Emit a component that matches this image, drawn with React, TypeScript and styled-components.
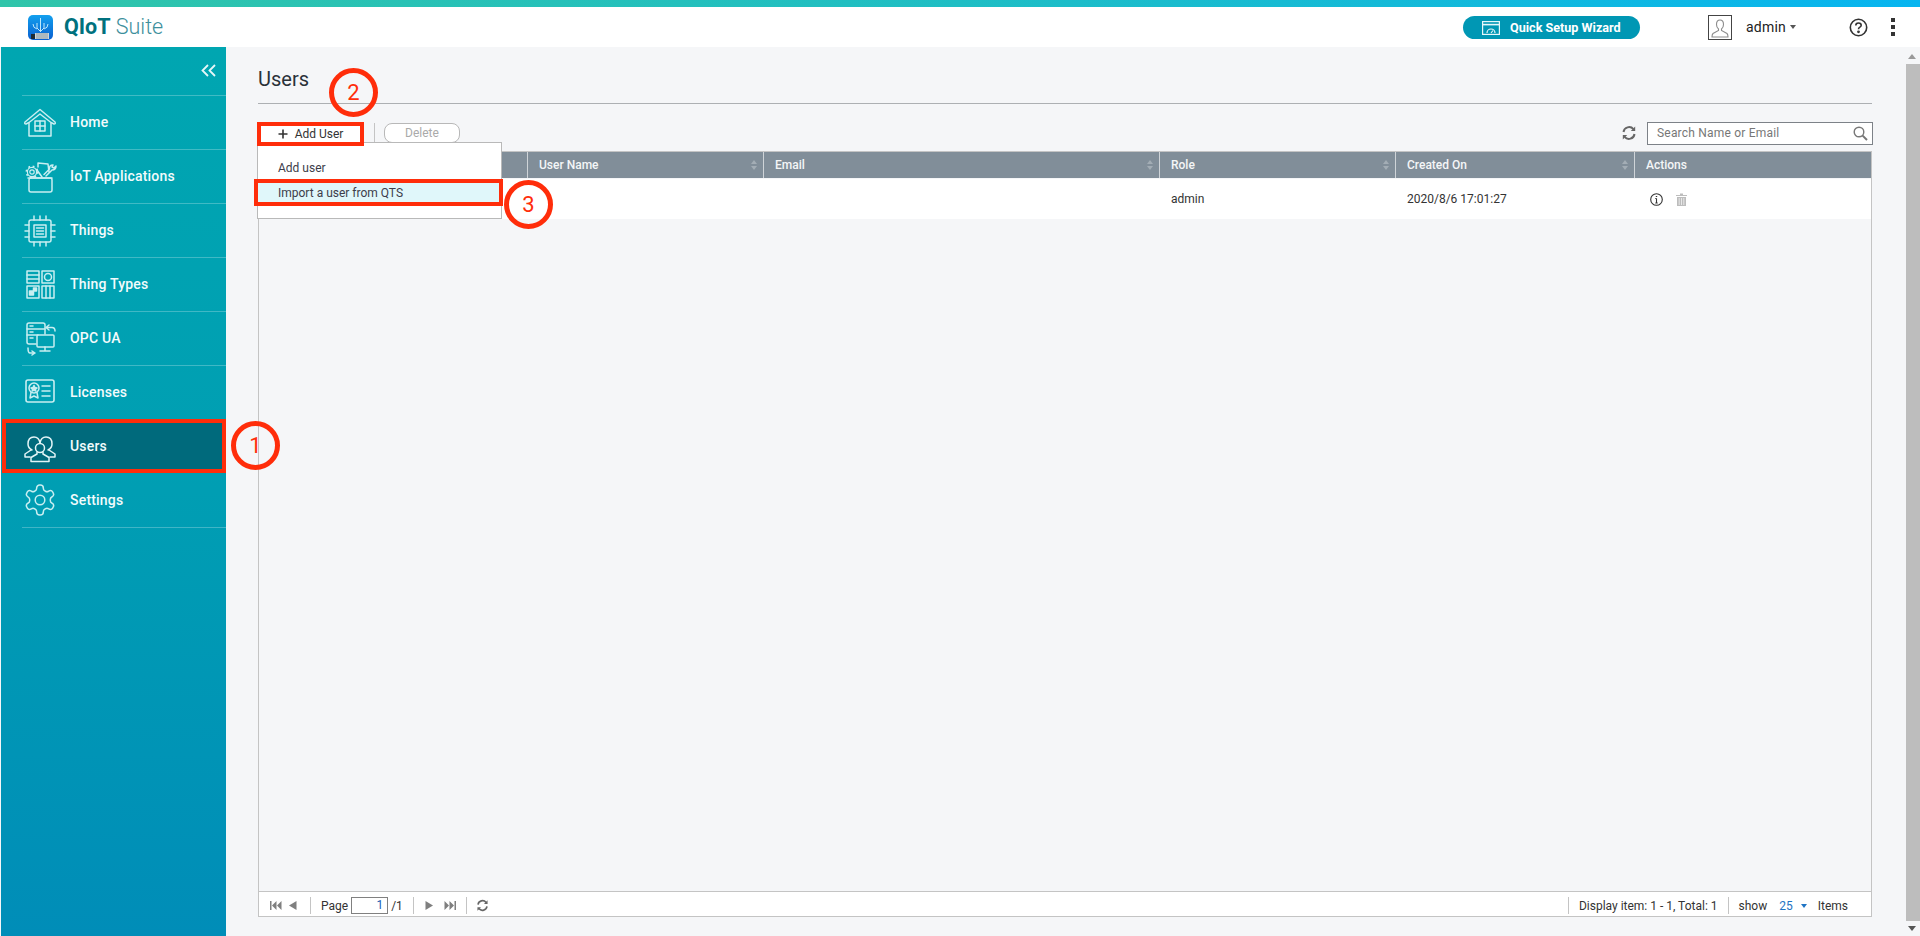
import React from "react";
import styled, { createGlobalStyle } from "styled-components";

const Global = createGlobalStyle`
  html, body { margin: 0; padding: 0; height: 100%; overflow: hidden; background: #f5f6f8; }
  body { font-family: Roboto, "Liberation Sans", sans-serif; color: #333; }
  #root { height: 100%; }
  * { box-sizing: border-box; }
`;

const Page = styled.div`
  position: relative;
  width: 1920px;
  height: 936px;
  display: flex;
  flex-direction: column;
  overflow: hidden;
`;
const TopStripe = styled.div`
  height: 7px;
  flex: none;
  background: linear-gradient(90deg, #30c5aa 0%, #1fbec4 50%, #07b5f0 100%);
`;
const Header = styled.header`
  height: 40px;
  flex: none;
  background: #fff;
  display: flex;
  align-items: center;
  padding-left: 28px;
`;
const Brand = styled.div`
  font-size: 21.5px;
  line-height: 26px;
  margin-left: 11px;
  color: #3d8f9c;
  font-weight: 300;
  width: 1399px;
  b { color: #00717e; font-weight: 700; }
`;
const WizardButton = styled.button`
  width: 177px;
  height: 23px;
  margin-top: 1px;
  border: none;
  border-radius: 12px;
  background: #0097b4;
  color: #fff;
  font: 700 12.6px Roboto, sans-serif;
  display: flex;
  align-items: center;
  padding: 0 0 0 19px;
  gap: 10px;
`;
const UserBox = styled.div`
  width: 24px;
  height: 25px;
  margin-left: 68px;
  margin-top: 1px;
  border: 1px solid #444;
  display: flex;
  align-items: center;
  justify-content: center;
`;
const UserName = styled.div`
  font-size: 14px;
  color: #222;
  margin-left: 14px;
  width: 44px;
  letter-spacing: 0.2px;
`;
const Caret = styled.span<{ $color?: string; $size?: number }>`
  display: inline-block;
  width: 0;
  height: 0;
  border-left: ${(p) => p.$size ?? 3}px solid transparent;
  border-right: ${(p) => p.$size ?? 3}px solid transparent;
  border-top: ${(p) => (p.$size ?? 3) + 1}px solid ${(p) => p.$color ?? "#555"};
`;
const HelpWrap = styled.div`
  margin-left: 53px;
  display: flex;
  align-items: center;
`;
const Dots = styled.div`
  margin-left: 23px;
  display: flex;
  flex-direction: column;
  gap: 3px;
  span { display: block; width: 4px; height: 4px; background: #333; }
`;

const Body = styled.div`
  flex: 1;
  display: flex;
  min-height: 0;
`;
const Sidebar = styled.nav`
  width: 225px;
  margin-left: 1px;
  flex: none;
  background: linear-gradient(180deg, #00a6b1 0%, #009eb3 50%, #008db8 100%);
  display: flex;
  flex-direction: column;
`;
const Collapse = styled.div`
  height: 48px;
  flex: none;
  position: relative;
  display: flex;
  justify-content: flex-end;
  padding: 17px 10px 0 0;
  &::after {
    content: "";
    position: absolute;
    left: 21px;
    right: 0;
    bottom: -1px;
    height: 1px;
    background: rgba(255, 255, 255, 0.25);
  }
`;
const NavItem = styled.div<{ $active?: boolean }>`
  position: relative;
  height: 54px;
  flex: none;
  display: flex;
  align-items: center;
  padding-left: 21px;
  font-size: 14px;
  font-weight: 500;
  letter-spacing: 0.2px;
  color: #f2fbfc;
  background: ${(p) => (p.$active ? "#006a7c" : "transparent")};
  box-shadow: ${(p) => (p.$active ? "inset 0 0 0 4px #ff2d0a" : "none")};
  margin-left: ${(p) => (p.$active ? "1px" : "0")};
  &::after {
    content: "";
    position: absolute;
    left: 21px;
    right: 0;
    bottom: -1px;
    height: 1px;
    background: ${(p) => (p.$active ? "transparent" : "rgba(255, 255, 255, 0.25)")};
  }
`;
const NavIcon = styled.div<{ $active?: boolean }>`
  width: 36px;
  height: 36px;
  margin-right: 12px;
  margin-left: ${(p) => (p.$active ? "-1px" : "0")};
  flex: none;
  svg { display: block; }
`;

const Main = styled.main`
  flex: 1;
  min-width: 0;
  padding: 0 32px 19px;
  display: flex;
  flex-direction: column;
`;
const Title = styled.h1`
  margin: 0;
  height: 57px;
  flex: none;
  border-bottom: 1px solid #adb0b3;
  font-size: 20px;
  font-weight: 400;
  line-height: 64px;
  color: #2a3138;
`;
const Toolbar = styled.div`
  position: relative;
  height: 47px;
  flex: none;
  display: flex;
  align-items: center;
  padding-top: 11px;
`;
const AddButton = styled.button`
  position: relative;
  z-index: 3;
  width: 107px;
  height: 24px;
  margin-left: -1px;
  margin-top: 2px;
  border: 4px solid #ff2d0a;
  background: #fff;
  display: flex;
  align-items: center;
  justify-content: center;
  gap: 7px;
  font: 400 12px Roboto, sans-serif;
  color: #333;
  padding: 0;
`;
const ToolDivider = styled.div`
  width: 1px;
  height: 21px;
  background: #c4c4c4;
  margin: 0 9px 0 10px;
`;
const DeleteButton = styled.button`
  width: 76px;
  height: 20px;
  border: 1px solid #b8b8b8;
  border-radius: 8px;
  background: #fff;
  font: 400 12px Roboto, sans-serif;
  color: #aaa;
  padding: 0;
`;
const ToolSpacer = styled.div`
  flex: 1;
`;
const Search = styled.div`
  width: 226px;
  height: 23px;
  margin-left: 10px;
  margin-right: -1px;
  border: 1px solid #7d8288;
  background: #fff;
  display: flex;
  align-items: center;
  justify-content: space-between;
  padding: 0 4px 0 9px;
  font-size: 12px;
  color: #777;
  letter-spacing: 0.2px;
`;
const Menu = styled.div`
  position: absolute;
  left: -1px;
  top: 38px;
  width: 245px;
  height: 77px;
  background: #fff;
  border: 1px solid #b9b9b9;
  padding-top: 12px;
  z-index: 2;
  font-size: 12px;
  color: #3d3d4a;
`;
const MenuItem = styled.div<{ $selected?: boolean }>`
  height: 26px;
  display: flex;
  align-items: center;
  padding-left: 20px;
  ${(p) =>
    p.$selected
      ? `
    margin: -2px -2px 0 -4px;
    height: 27px;
    background: #e0f7fa;
    border: 4px solid #ff2d0a;
  `
      : ""}
`;

const TablePanel = styled.section`
  flex: 1;
  min-height: 0;
  display: flex;
  flex-direction: column;
  border: 1px solid #c4c4c4;
`;
const HeadRow = styled.div`
  height: 26px;
  flex: none;
  display: grid;
  grid-template-columns: 269px 236px 396px 236px 239px 1fr;
  background: #818e99;
  color: #f4f6f7;
  font-size: 12px;
  font-weight: 500;
`;
const HeadCell = styled.div<{ $last?: boolean }>`
  display: flex;
  align-items: center;
  justify-content: space-between;
  padding: 0 6px 0 11px;
  border-right: ${(p) => (p.$last ? "none" : "1px solid #cfd4d8")};
`;
const Sorter = styled.div`
  display: flex;
  flex-direction: column;
  gap: 2px;
  span { display: block; width: 0; height: 0; border-left: 3px solid transparent; border-right: 3px solid transparent; }
  span:first-child { border-bottom: 4px solid #a3adb5; }
  span:last-child { border-top: 4px solid #a3adb5; }
`;
const DataRow = styled.div`
  height: 40px;
  flex: none;
  margin-top: 1px;
  background: #fff;
  display: grid;
  grid-template-columns: 269px 236px 396px 236px 239px 1fr;
  font-size: 12px;
  color: #333;
`;
const DataCell = styled.div<{ $actions?: boolean }>`
  display: flex;
  align-items: center;
  gap: ${(p) => (p.$actions ? "13px" : "0")};
  padding-left: ${(p) => (p.$actions ? "15px" : "11px")};
`;
const TableFill = styled.div`
  flex: 1;
`;
const Pager = styled.footer`
  height: 25px;
  flex: none;
  background: #fff;
  border-top: 1px solid #c4c4c4;
  display: flex;
  align-items: center;
  padding: 3px 0 0 11px;
  font-size: 12px;
  color: #333;
`;
const PagerIcon = styled.div<{ $gap?: number }>`
  margin-right: ${(p) => p.$gap ?? 7}px;
  display: flex;
  align-items: center;
`;
const PagerDivider = styled.div<{ $left?: number; $right?: number }>`
  width: 1px;
  height: 17px;
  background: #c4c4c4;
  margin: 0 ${(p) => p.$right ?? 10}px 0 ${(p) => p.$left ?? 10}px;
`;
const PageInput = styled.div`
  width: 37px;
  height: 17px;
  margin: 0 3px 0 3px;
  border: 1px solid #808080;
  text-align: right;
  padding-right: 4px;
  line-height: 15px;
  color: #1a5fb4;
`;
const PagerSpacer = styled.div`
  flex: 1;
`;
const PageSize = styled.span`
  color: #1f74c4;
  margin: 0 8px 0 12px;
`;
const ItemsLabel = styled.span`
  margin: 0 23px 0 11px;
`;

const Scrollbar = styled.aside`
  width: 16px;
  flex: none;
  display: flex;
  flex-direction: column;
  align-items: center;
  padding-top: 7px;
`;
const ScrollUp = styled.span`
  width: 0;
  height: 0;
  border-left: 4px solid transparent;
  border-right: 4px solid transparent;
  border-bottom: 5px solid #9a9a9a;
`;
const ScrollThumb = styled.div`
  width: 14px;
  margin: 5px 0 5px 2px;
  flex: 1;
  background: #bdbdbd;
`;
const ScrollDown = styled.span`
  width: 0;
  height: 0;
  border-left: 4px solid transparent;
  border-right: 4px solid transparent;
  border-top: 5px solid #555;
  margin-bottom: 5px;
`;

const Marker = styled.div<{ $x: number; $y: number }>`
  position: absolute;
  left: ${(p) => p.$x - 24}px;
  top: ${(p) => p.$y - 24}px;
  width: 49px;
  height: 49px;
  border-radius: 50%;
  border: 5px solid #ff2d0a;
  color: #ff2d0a;
  font-size: 22px;
  font-weight: 400;
  display: flex;
  align-items: center;
  justify-content: center;
  z-index: 5;
`;

const st = { fill: "none", stroke: "#c8eef1", strokeWidth: 1.5, strokeLinejoin: "round" as const, strokeLinecap: "round" as const };

const HomeIcon = () => (
  <svg width="36" height="36" viewBox="0 0 36 36" {...st}>
    <path d="M3 18 L18 5.5 L33 18 Q34 20 32 20 L29 18.5 L18 10 L7 18.5 L4 20 Q2 20 3 18Z" />
    <path d="M7 19 V32 H29 V19" />
    <rect x="13" y="17" width="10" height="10" />
    <path d="M18 17 V27 M13 22 H23" />
  </svg>
);
const AppsIcon = () => (
  <svg width="36" height="36" viewBox="0 0 36 36" {...st}>
    <rect x="7" y="20" width="23" height="14" rx="2" />
    <path d="M6 20 H30" />
    <circle cx="10" cy="14" r="2.2" strokeWidth="1.2" />
    <circle cx="10" cy="14" r="4.6" strokeWidth="1.2" />
    <circle cx="10" cy="14" r="5.6" strokeWidth="1.8" strokeDasharray="1.8 2.6" strokeLinecap="butt" />
    <path d="M16 9 L16 5 L26 6 L27 14 M15 12 L20 19" />
    <path d="M24 18 L30 12 Q34 12 34 8 L32 10 L30 9 L31 7 Q27 7 27.5 11 L22 16.5" />
  </svg>
);
const ChipIcon = () => (
  <svg width="36" height="36" viewBox="0 0 36 36" {...st}>
    <rect x="7" y="8" width="22" height="22" rx="2" />
    <rect x="12" y="13" width="12" height="12" />
    <path d="M14.5 16 H21.5 M14.5 19 H21.5 M14.5 22 H21.5" />
    <path d="M12 4 V8 M18 4 V8 M24 4 V8 M12 30 V34 M18 30 V34 M24 30 V34 M3 13 H7 M3 19 H7 M3 25 H7 M29 13 H33 M29 19 H33 M29 25 H33" />
  </svg>
);
const TypesIcon = () => (
  <svg width="36" height="36" viewBox="0 0 36 36" {...st}>
    <rect x="5" y="5" width="12" height="12" />
    <path d="M5 9 H17 M5 13 H17" />
    <rect x="20" y="5" width="12" height="12" />
    <circle cx="26" cy="11" r="3.5" />
    <rect x="5" y="20" width="12" height="12" />
    <rect x="7.5" y="25" width="4" height="4" fill="#c8eef1" />
    <rect x="11.5" y="22" width="3" height="3" fill="#c8eef1" />
    <rect x="20" y="20" width="12" height="12" />
    <path d="M24 20 V32 M28 20 V32" />
  </svg>
);
const OpcIcon = () => (
  <svg width="36" height="36" viewBox="0 0 36 36" {...st}>
    <path d="M14 24 H7 Q5 24 5 22 V5 Q5 3 7 3 H21 Q23 3 23 5 V14" />
    <path d="M5 9 H23 M5 15 H16" />
    <path d="M8 6 H11 M8 12 H11 M8 18 H11" />
    <rect x="15" y="15" width="17" height="12" rx="1" />
    <path d="M23 27 V31 M18 31 H28" />
    <path d="M27 10 L24 7.5 L27 5 M24 7.5 H30 Q33 7.5 33 11" />
    <path d="M10 31 L13 33 L10 35 M13 33 H8 Q6 33 6 28" />
  </svg>
);
const LicenseIcon = () => (
  <svg width="36" height="36" viewBox="0 0 36 36" {...st}>
    <rect x="4" y="6" width="28" height="22" rx="2" strokeWidth="1.6" />
    <circle cx="12" cy="14" r="5" />
    <path d="M12 11.5 L13 13.5 L15 14 L13.4 15.3 L13.8 17 L12 16 L10.2 17 L10.6 15.3 L9 14 L11 13.5Z" fill="#c8eef1" />
    <path d="M9 18.5 L8 24 L12 22 L16 24 L15 18.5" />
    <path d="M20 12 H28 M20 17 H28 M20 22 H28" />
  </svg>
);
const UsersIcon = () => (
  <svg width="36" height="36" viewBox="0 0 36 36" {...st} stroke="#e3f5f7">
    <path d="M18 15 Q17 9 12 9 Q6 9 6 16 Q6 20 10 22" />
    <path d="M18 15 Q19 9 24 9 Q30 9 30 16 Q30 20 26 22" />
    <path d="M9 22 L3 26 V29 H8" />
    <path d="M27 22 L33 26 V29 H28" />
    <circle cx="18" cy="20" r="4.5" />
    <path d="M15 24.5 V26 L9 29.5 V33.5 H27 V29.5 L21 26 V24.5" />
  </svg>
);
const GearIcon = () => (
  <svg width="36" height="36" viewBox="0 0 24 24" {...st} strokeWidth={1}>
    <path d="M12.22 2h-.44a2 2 0 0 0-2 2v.18a2 2 0 0 1-1 1.73l-.43.25a2 2 0 0 1-2 0l-.15-.08a2 2 0 0 0-2.73.73l-.22.38a2 2 0 0 0 .73 2.73l.15.1a2 2 0 0 1 1 1.72v.51a2 2 0 0 1-1 1.74l-.15.09a2 2 0 0 0-.73 2.73l.22.38a2 2 0 0 0 2.73.73l.15-.08a2 2 0 0 1 2 0l.43.25a2 2 0 0 1 1 1.73V20a2 2 0 0 0 2 2h.44a2 2 0 0 0 2-2v-.18a2 2 0 0 1 1-1.73l.43-.25a2 2 0 0 1 2 0l.15.08a2 2 0 0 0 2.73-.73l.22-.39a2 2 0 0 0-.73-2.73l-.15-.08a2 2 0 0 1-1-1.74v-.5a2 2 0 0 1 1-1.74l.15-.09a2 2 0 0 0 .73-2.73l-.22-.38a2 2 0 0 0-2.73-.73l-.15.08a2 2 0 0 1-2 0l-.43-.25a2 2 0 0 1-1-1.73V4a2 2 0 0 0-2-2z" />
    <circle cx="12" cy="12" r="3.2" />
  </svg>
);

const Logo = () => (
  <svg width="25" height="25" viewBox="0 0 25 25">
    <defs>
      <linearGradient id="lg" x1="0" y1="0" x2="0" y2="1">
        <stop offset="0" stopColor="#12a0ee" />
        <stop offset="1" stopColor="#0a5fd0" />
      </linearGradient>
    </defs>
    <rect width="25" height="25" rx="5" fill="url(#lg)" />
    <g fill="none" stroke="#bfe9fb" strokeWidth="1">
      <path d="M12.5 3 V17 M9 8 V13 L12 16 M16 8 V13 L13 16 M5 9 Q5 13 9 14 M20 9 Q20 13 16 14" />
    </g>
    <rect x="7" y="18" width="14" height="6" fill="#cfd8dc" />
    <path d="M9 18 V24 M11 18 V24 M13 18 V24 M15 18 V24 M17 18 V24 M19 18 V24" stroke="#7c8b92" strokeWidth="0.8" />
    <rect x="3" y="19" width="4" height="5" fill="#1d2a33" />
  </svg>
);

const refresh = (size: number, color: string) => (
  <svg width={size} height={size} viewBox="0 0 16 16" fill="none" stroke={color} strokeWidth="2">
    <path d="M2.5 7 A5.6 5.6 0 0 1 12.4 4.2" />
    <path d="M13.5 9 A5.6 5.6 0 0 1 3.6 11.8" />
    <path d="M14.2 1.5 V6 H9.8 Z" fill={color} stroke="none" />
    <path d="M1.8 14.5 V10 H6.2 Z" fill={color} stroke="none" />
  </svg>
);

const PageArrow = ({ dir, bar }: { dir: "l" | "r"; bar?: boolean }) => (
  <svg width={bar ? 12 : 8} height="9" viewBox={bar ? "0 0 12 9" : "0 0 8 9"} fill="#7f7f7f">
    {dir === "l" && !bar && <path d="M7.5 0 V9 L0 4.5Z" />}
    {dir === "r" && !bar && <path d="M0.5 0 V9 L8 4.5Z" />}
    {dir === "l" && bar && <path d="M0 0 H1.5 V9 H0Z M6.5 0 V9 L2 4.5Z M11.5 0 V9 L7 4.5Z" />}
    {dir === "r" && bar && <path d="M12 0 H10.5 V9 H12Z M5.5 0 V9 L10 4.5Z M0.5 0 V9 L5 4.5Z" />}
  </svg>
);

const nav = [
  { label: "Home", icon: <HomeIcon /> },
  { label: "IoT Applications", icon: <AppsIcon /> },
  { label: "Things", icon: <ChipIcon /> },
  { label: "Thing Types", icon: <TypesIcon /> },
  { label: "OPC UA", icon: <OpcIcon /> },
  { label: "Licenses", icon: <LicenseIcon /> },
  { label: "Users", icon: <UsersIcon />, active: true },
  { label: "Settings", icon: <GearIcon /> },
];

const columns = ["", "User Name", "Email", "Role", "Created On", "Actions"];

export default function App() {
  return (
    <Page>
      <Global />
      <TopStripe />
      <Header>
        <Logo />
        <Brand>
          <b>QIoT</b> Suite
        </Brand>
        <WizardButton>
          <svg width="18" height="14" viewBox="0 0 18 14" fill="none" stroke="#e6f7fa" strokeWidth="1.2">
            <rect x="0.6" y="0.6" width="16.8" height="12.8" />
            <path d="M0.6 3.6 H17.4" strokeWidth="1.6" />
            <path d="M5 12 A4 4 0 0 1 13 12" />
            <path d="M9 12 L11 9.5" />
          </svg>
          Quick Setup Wizard
        </WizardButton>
        <UserBox>
          <svg width="18" height="20" viewBox="0 0 18 20" fill="none" stroke="#8c8c8c" strokeWidth="1.1">
            <path d="M9 2 Q5.5 2 5.5 6.5 Q5.5 9.5 7.5 11 V12.5 L2 15.5 Q1 16.5 1 19 H17 Q17 16.5 16 15.5 L10.5 12.5 V11 Q12.5 9.5 12.5 6.5 Q12.5 2 9 2Z" />
          </svg>
        </UserBox>
        <UserName>admin</UserName>
        <Caret />
        <HelpWrap>
          <svg width="19" height="19" viewBox="0 0 19 19" fill="none" stroke="#333" strokeWidth="1.6">
            <circle cx="9.5" cy="9.5" r="8.2" />
            <path d="M6.8 7.5 Q6.8 5 9.5 5 Q12.2 5 12.2 7.3 Q12.2 8.6 10.6 9.4 Q9.5 10 9.5 11.3" />
            <circle cx="9.5" cy="13.8" r="0.6" fill="#333" />
          </svg>
        </HelpWrap>
        <Dots>
          <span />
          <span />
          <span />
        </Dots>
      </Header>
      <Body>
        <Sidebar>
          <Collapse>
            <svg width="15" height="13" viewBox="0 0 15 13" fill="none" stroke="#e6f7f8" strokeWidth="1.8">
              <path d="M7 1 L1.5 6.5 L7 12 M14 1 L8.5 6.5 L14 12" />
            </svg>
          </Collapse>
          {nav.map((n) => (
            <NavItem key={n.label} $active={n.active}>
              <NavIcon $active={n.active}>{n.icon}</NavIcon>
              {n.label}
            </NavItem>
          ))}
        </Sidebar>
        <Main>
          <Title>Users</Title>
          <Toolbar>
            <AddButton>
              <svg width="10" height="10" viewBox="0 0 10 10" stroke="#333" strokeWidth="1.6">
                <path d="M5 0.5 V9.5 M0.5 5 H9.5" />
              </svg>
              Add User
            </AddButton>
            <ToolDivider />
            <DeleteButton>Delete</DeleteButton>
            <ToolSpacer />
            {refresh(16, "#666")}
            <Search>
              Search Name or Email
              <svg width="15" height="15" viewBox="0 0 15 15" fill="none" stroke="#777" strokeWidth="1.4">
                <circle cx="6" cy="6" r="4.8" />
                <path d="M9.6 9.6 L14 14" strokeWidth="2" />
              </svg>
            </Search>
            <Menu>
              <MenuItem>Add user</MenuItem>
              <MenuItem $selected>Import a user from QTS</MenuItem>
            </Menu>
          </Toolbar>
          <TablePanel>
            <HeadRow>
              {columns.map((c, i) => (
                <HeadCell key={c || "sel"} $last={i === columns.length - 1}>
                  {c}
                  {i < columns.length - 1 && (
                    <Sorter>
                      <span />
                      <span />
                    </Sorter>
                  )}
                </HeadCell>
              ))}
            </HeadRow>
            <DataRow>
              <DataCell />
              <DataCell />
              <DataCell />
              <DataCell>admin</DataCell>
              <DataCell>2020/8/6 17:01:27</DataCell>
              <DataCell $actions>
                <svg width="13" height="13" viewBox="0 0 13 13" fill="none" stroke="#333" strokeWidth="1.1">
                  <circle cx="6.5" cy="6.5" r="5.8" />
                  <path d="M6.5 5.5 V10 M5.3 10 H7.7 M5.3 5.5 H6.5" />
                  <path d="M6.5 3 V4" strokeWidth="1.4" />
                </svg>
                <svg width="11" height="13" viewBox="0 0 11 13" fill="#bdbdbd">
                  <path d="M0 2 H4 V0.5 H7 V2 H11 V3 H0Z M1 4 H10 V13 H1Z" />
                  <path d="M3.2 5 V12 M5.5 5 V12 M7.8 5 V12" stroke="#f2f2f2" strokeWidth="0.8" />
                </svg>
              </DataCell>
            </DataRow>
            <TableFill />
            <Pager>
              <PagerIcon>
                <PageArrow dir="l" bar />
              </PagerIcon>
              <PagerIcon $gap={0}>
                <PageArrow dir="l" />
              </PagerIcon>
              <PagerDivider $left={13} $right={10} />
              Page
              <PageInput>1</PageInput>
              /1
              <PagerDivider $left={10} $right={11} />
              <PagerIcon $gap={11}>
                <PageArrow dir="r" />
              </PagerIcon>
              <PagerIcon $gap={0}>
                <PageArrow dir="r" bar />
              </PagerIcon>
              <PagerDivider $left={10} $right={9} />
              {refresh(13, "#666")}
              <PagerSpacer />
              <PagerDivider $left={0} $right={10} />
              Display item: 1 - 1, Total: 1
              <PagerDivider $left={10} $right={10} />
              show
              <PageSize>25</PageSize>
              <Caret $color="#1f74c4" $size={3} />
              <ItemsLabel>Items</ItemsLabel>
            </Pager>
          </TablePanel>
        </Main>
        <Scrollbar>
          <ScrollUp />
          <ScrollThumb />
          <ScrollDown />
        </Scrollbar>
      </Body>
      <Marker $x={255} $y={445}>1</Marker>
      <Marker $x={353} $y={92}>2</Marker>
      <Marker $x={528} $y={204}>3</Marker>
    </Page>
  );
}
